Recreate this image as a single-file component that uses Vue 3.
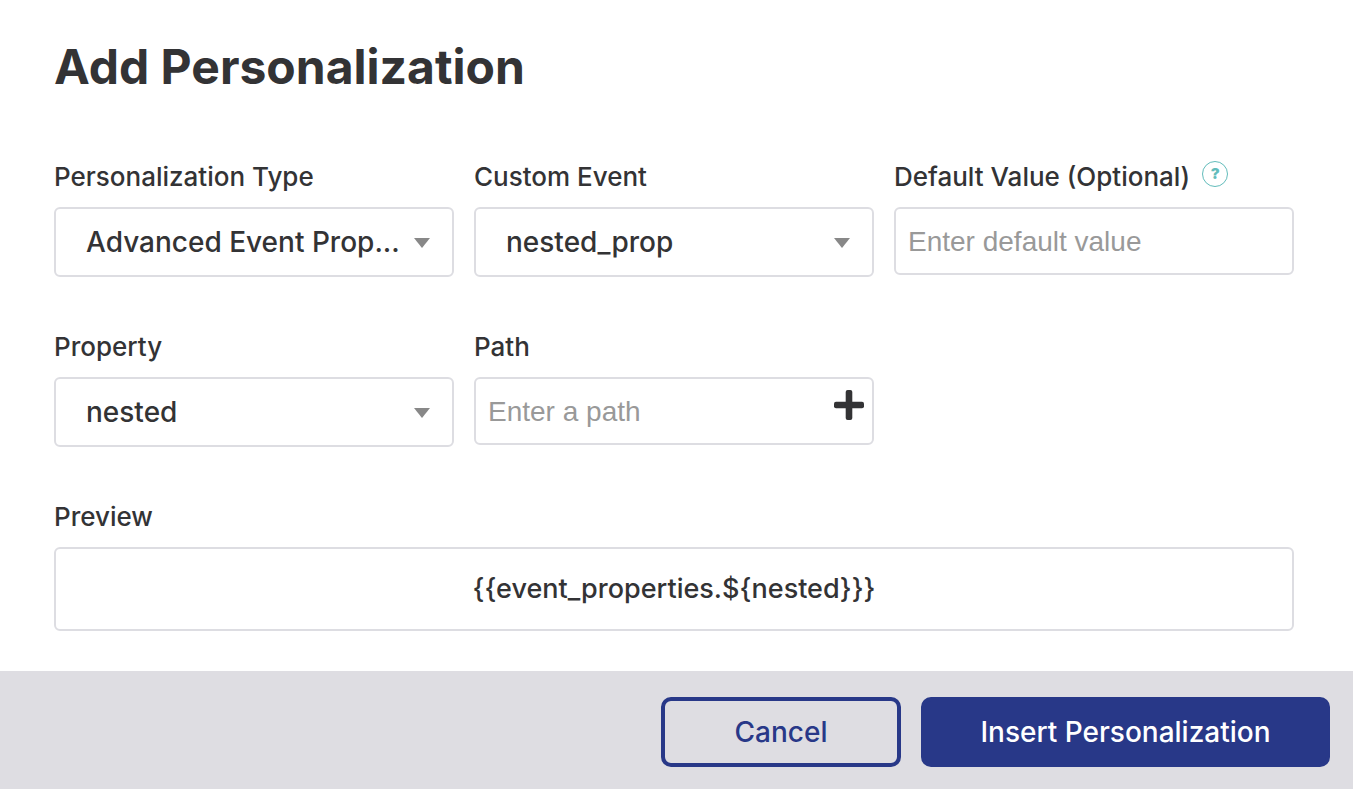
<script setup>
import { ref } from 'vue'

const type = ref('Advanced Event Prop...')
const customEvent = ref('nested_prop')
const property = ref('nested')
const defaultValue = ref('')
const path = ref('')
const preview = '{{event_properties.${nested}}}'
</script>

<template>
  <form class="dialog" @submit.prevent>
    <main class="body">
      <h1 class="title">Add Personalization</h1>

      <div class="fields">
        <div class="field">
          <label class="label" for="type">Personalization Type</label>
          <div class="control">
            <select id="type" v-model="type" class="box select">
              <option>Advanced Event Prop...</option>
            </select>
            <svg class="arrow" viewBox="0 0 16 10" aria-hidden="true"><path d="M0 0H16L8 10Z" /></svg>
          </div>
        </div>

        <div class="field">
          <label class="label" for="event">Custom Event</label>
          <div class="control">
            <select id="event" v-model="customEvent" class="box select">
              <option>nested_prop</option>
            </select>
            <svg class="arrow" viewBox="0 0 16 10" aria-hidden="true"><path d="M0 0H16L8 10Z" /></svg>
          </div>
        </div>

        <div class="field">
          <div class="label-row">
            <label class="label" for="default">Default Value (Optional)</label>
            <button class="help" type="button" aria-label="Help">?</button>
          </div>
          <input id="default" v-model="defaultValue" class="box input" type="text" placeholder="Enter default value" />
        </div>

        <div class="field">
          <label class="label" for="property">Property</label>
          <div class="control">
            <select id="property" v-model="property" class="box select">
              <option>nested</option>
            </select>
            <svg class="arrow" viewBox="0 0 16 10" aria-hidden="true"><path d="M0 0H16L8 10Z" /></svg>
          </div>
        </div>

        <div class="field">
          <label class="label" for="path">Path</label>
          <div class="control">
            <input id="path" v-model="path" class="box input" type="text" placeholder="Enter a path" />
            <button class="add" type="button" aria-label="Add path">
              <svg viewBox="0 0 30 30" aria-hidden="true">
                <rect x="0" y="11.7" width="30" height="6.6" rx="2" />
                <rect x="11.7" y="0" width="6.6" height="30" rx="2" />
              </svg>
            </button>
          </div>
        </div>

        <div class="field wide">
          <label class="label" for="preview">Preview</label>
          <output id="preview" class="box preview">{{ preview }}</output>
        </div>
      </div>
    </main>

    <footer class="footer">
      <button class="button cancel" type="button">Cancel</button>
      <button class="button insert" type="submit">Insert Personalization</button>
    </footer>
  </form>
</template>

<style>
body {
  background: #fff;
}
</style>

<style scoped>
.dialog,
.dialog * {
  box-sizing: border-box;
}

.dialog {
  min-height: 100vh;
  display: flex;
  flex-direction: column;
  font-family: Inter, "Liberation Sans", sans-serif;
  font-weight: 500;
  color: #333335;
}

.body {
  padding: 35px 59px 40px 54px;
}

.title {
  margin: 0 0 61px;
  font-size: 48px;
  line-height: 64px;
  font-weight: 700;
}

.fields {
  display: grid;
  grid-template-columns: repeat(3, minmax(0, 1fr));
  gap: 53px 20px;
}

.field {
  display: flex;
  flex-direction: column;
  align-items: stretch;
  min-height: 117px;
}

.wide {
  grid-column: 1 / -1;
}

.label {
  font-size: 26px;
  line-height: 34px;
  margin-bottom: 13px;
  white-space: nowrap;
}

.label-row {
  display: flex;
  align-items: flex-start;
  gap: 12px;
}

.help {
  width: 26px;
  height: 26px;
  margin: 1px 0 0;
  padding: 0;
  border: 1px solid #62bcbb;
  border-radius: 50%;
  background: none;
  color: #62bcbb;
  font: 900 15px/24px Inter, sans-serif;
}

.control {
  position: relative;
  display: flex;
}

.box {
  width: 100%;
  min-width: 0;
  border: 2px solid #dddde2;
  border-radius: 6px;
  background: #fff;
  color: #333335;
}

.select {
  appearance: none;
  height: 70px;
  padding: 0 48px 0 30px;
  font: 500 28px/36px Inter, sans-serif;
}

.arrow {
  position: absolute;
  right: 24px;
  top: 31px;
  width: 16px;
  height: 10px;
  fill: #888;
  pointer-events: none;
}

.input {
  height: 68px;
  padding: 2px 12px 0;
  font: 400 28px/36px "Liberation Sans", Arial, sans-serif;
}

.input::placeholder {
  color: #999;
  opacity: 1;
}

.add {
  position: absolute;
  right: 10px;
  top: 13px;
  width: 30px;
  height: 30px;
  padding: 0;
  border: 0;
  background: none;
}

.add svg {
  display: block;
  fill: #333335;
}

.preview {
  display: flex;
  align-items: center;
  justify-content: center;
  height: 84px;
  font-size: 27px;
  line-height: 36px;
}

.footer {
  flex: 1;
  display: flex;
  justify-content: flex-end;
  align-items: flex-start;
  gap: 20px;
  padding: 26px 23px 22px;
  background: #dedde2;
}

.button {
  height: 70px;
  padding: 0;
  border: 4px solid #283888;
  border-radius: 10px;
  font: 500 28px/36px Inter, sans-serif;
}

.cancel {
  width: 240px;
  background: none;
  color: #283888;
}

.insert {
  width: 409px;
  background: #283888;
  color: #fff;
}
</style>
